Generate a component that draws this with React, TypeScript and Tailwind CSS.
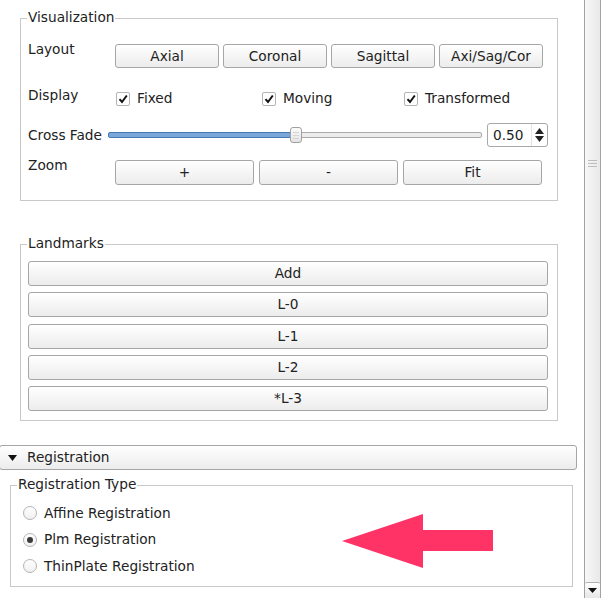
import React from "react";

const FONT = { fontFamily: '"DejaVu Sans", Verdana, sans-serif' };

function Btn({ children, className = "" }: { children: React.ReactNode; className?: string }) {
  return (
    <div
      className={
        "flex items-center justify-center rounded-[3px] border border-[#a6a6a6] bg-linear-to-b from-white to-[#ececec] text-[13.7px] leading-[15px] text-[#222] " +
        className
      }
    >
      {children}
    </div>
  );
}

function Check({ label }: { label: string }) {
  return (
    <div className="flex h-[15px] items-center gap-[7px]">
      <div className="flex h-[14px] w-[14px] items-center justify-center rounded-[2px] border border-[#b4b4b4] bg-white">
        <svg width="10" height="10" viewBox="0 0 10 10">
          <path d="M1.5 5.2 L4 8 L8.8 1.5" fill="none" stroke="#111" strokeWidth="2" />
        </svg>
      </div>
      <span className="text-[13.7px] leading-[15px] text-[#222]">{label}</span>
    </div>
  );
}

function Radio({ label, on = false }: { label: string; on?: boolean }) {
  return (
    <div className="flex h-[26.5px] items-center gap-[7px]">
      <div className="flex h-[14px] w-[14px] items-center justify-center rounded-full border border-[#b4b4b4] bg-linear-to-b from-white to-[#f0f0f0]">
        {on && <div className="h-[6px] w-[6px] rounded-full bg-[#3a3a3a]" />}
      </div>
      <span className="text-[13.7px] leading-[15px] text-[#222]">{label}</span>
    </div>
  );
}

function Group({ title, className = "", titleLeft = "left-[6px]", children }: { title: string; className?: string; titleLeft?: string; children: React.ReactNode }) {
  return (
    <div className={"relative border border-[#c9c9c9] " + className}>
      <span className={"absolute top-[-9px] bg-white px-[1px] text-[13.7px] leading-[15px] text-[#222] " + titleLeft}>{title}</span>
      {children}
    </div>
  );
}

export default function App() {
  return (
    <div className="relative flex h-[600px] w-[605px] overflow-hidden bg-white" style={FONT}>
      {/* content */}
      <div className="w-[584px] shrink-0">
        {/* Visualization */}
        <Group title="Visualization" className="ml-[20px] mt-[18px] h-[183px] w-[538px]">
          {/* Layout */}
          <div className="mt-[23px] flex items-start">
            <div className="w-[94px] pl-[7px] text-[13.7px] leading-[15px] text-[#222]">Layout</div>
            <div className="mt-[2px] flex gap-[4px]">
              <Btn className="h-[24px] w-[104px]">Axial</Btn>
              <Btn className="h-[24px] w-[104px]">Coronal</Btn>
              <Btn className="h-[24px] w-[104px]">Sagittal</Btn>
              <Btn className="h-[24px] w-[104px]">Axi/Sag/Cor</Btn>
            </div>
          </div>
          {/* Display */}
          <div className="mt-[20px] flex items-start">
            <div className="w-[95px] pl-[7px] text-[13.7px] leading-[15px] text-[#222]">Display</div>
            <div className="mt-[3px] flex">
              <div className="w-[146px]"><Check label="Fixed" /></div>
              <div className="w-[142px]"><Check label="Moving" /></div>
              <div><Check label="Transformed" /></div>
            </div>
          </div>
          {/* Cross fade */}
          <div className="mt-[17px] flex h-[24px] items-center">
            <div className="w-[87px] pl-[7px] text-[13.7px] leading-[15px] text-[#222] whitespace-nowrap">Cross Fade</div>
            <div className="relative h-[16px] w-[374px]">
              <div className="absolute left-0 top-[5px] flex h-[6px] w-[374px]">
                <div className="h-[6px] w-[188px] rounded-l-[2px] border border-[#4a78b0] bg-[#79a6d8]" />
                <div className="h-[6px] flex-1 rounded-r-[2px] border border-[#aaaaaa] bg-[#ececec]" />
              </div>
              <div className="absolute left-[182px] top-[0px] flex h-[16px] w-[12px] flex-col items-center justify-center gap-[2px] rounded-[3px] border border-[#a0a0a0] bg-linear-to-b from-[#fbfbfb] to-[#e4e4e4]">
                <div className="h-[1px] w-[6px] bg-[#d4d4d4]" />
                <div className="h-[1px] w-[6px] bg-[#d4d4d4]" />
                <div className="h-[1px] w-[6px] bg-[#d4d4d4]" />
              </div>
            </div>
            <div className="ml-[5px] flex h-[24px] w-[61px] items-center rounded-[3px] border border-[#a8a8a8] bg-white">
              <span className="w-[43px] pl-[5px] text-[13.7px] leading-[15px] text-[#222]">0.50</span>
              <div className="flex h-[22px] w-[15px] flex-col items-center justify-center gap-[2px] border-l border-[#e2e2e2]">
                <svg width="9" height="6" viewBox="0 0 9 6"><path d="M4.5 0 L9 6 L0 6 Z" fill="#222" /></svg>
                <svg width="9" height="6" viewBox="0 0 9 6"><path d="M0 0 L9 0 L4.5 6 Z" fill="#222" /></svg>
              </div>
            </div>
          </div>
          {/* Zoom */}
          <div className="mt-[11px] flex items-start">
            <div className="w-[94px] pl-[7px] text-[13.7px] leading-[15px] text-[#222]">Zoom</div>
            <div className="mt-[2px] flex gap-[5px]">
              <Btn className="h-[25px] w-[139px]">+</Btn>
              <Btn className="h-[25px] w-[139px]">-</Btn>
              <Btn className="h-[25px] w-[139px]">Fit</Btn>
            </div>
          </div>
        </Group>

        {/* Landmarks */}
        <Group title="Landmarks" className="ml-[20px] mt-[43px] h-[177px] w-[538px]">
          <div className="mt-[16px] flex flex-col gap-[6.25px] pl-[7px]">
            {["Add", "L-0", "L-1", "L-2", "*L-3"].map((t) => (
              <Btn key={t} className="h-[25px] w-[520px]">{t}</Btn>
            ))}
          </div>
        </Group>

        {/* Registration collapsible */}
        <div className="ml-[-1px] mt-[24px] flex h-[25px] w-[578px] items-center rounded-[3px] border border-[#a6a6a6] bg-linear-to-b from-white to-[#ececec]">
          <svg className="ml-[8px]" width="9" height="6" viewBox="0 0 9 6"><path d="M0 0 L9 0 L4.5 6 Z" fill="#111" /></svg>
          <span className="ml-[10px] text-[13.7px] leading-[15px] text-[#222]">Registration</span>
        </div>

        {/* Registration Type */}
        <Group title="Registration Type" className="ml-[10px] mt-[15px] h-[102px] w-[563px]">
          <div className="mt-[14px] pl-[12px]">
            <Radio label="Affine Registration" />
            <Radio label="Plm Registration" on />
            <Radio label="ThinPlate Registration" />
          </div>
        </Group>
      </div>

      {/* scrollbar */}
      <div className="relative flex h-[598px] w-[17px] shrink-0 flex-col border-x border-[#a3a3a3] bg-linear-to-r from-[#f7f7f7] to-[#e9e9e9]">
        <div className="flex h-[326px] flex-col items-center justify-center gap-[2px]">
          <div className="h-[1px] w-[9px] bg-[#bdbdbd]" />
          <div className="h-[1px] w-[9px] bg-[#bdbdbd]" />
          <div className="h-[1px] w-[9px] bg-[#bdbdbd]" />
        </div>
        <div className="flex-1" />
        <div className="flex h-[16px] items-center justify-center rounded-[2px] border-t border-[#b0b0b0] bg-linear-to-b from-white to-[#e6e6e6]">
          <svg width="9" height="5" viewBox="0 0 9 5"><path d="M0 0 L9 0 L4.5 5 Z" fill="#111" /></svg>
        </div>
      </div>

      {/* annotation arrow */}
      <svg className="pointer-events-none absolute left-0 top-0" width="605" height="600" viewBox="0 0 605 600">
        <polygon points="342,541 423,514 423,530 493,530 493,551 423,551 423,568" fill="#ff3366" />
      </svg>
    </div>
  );
}
